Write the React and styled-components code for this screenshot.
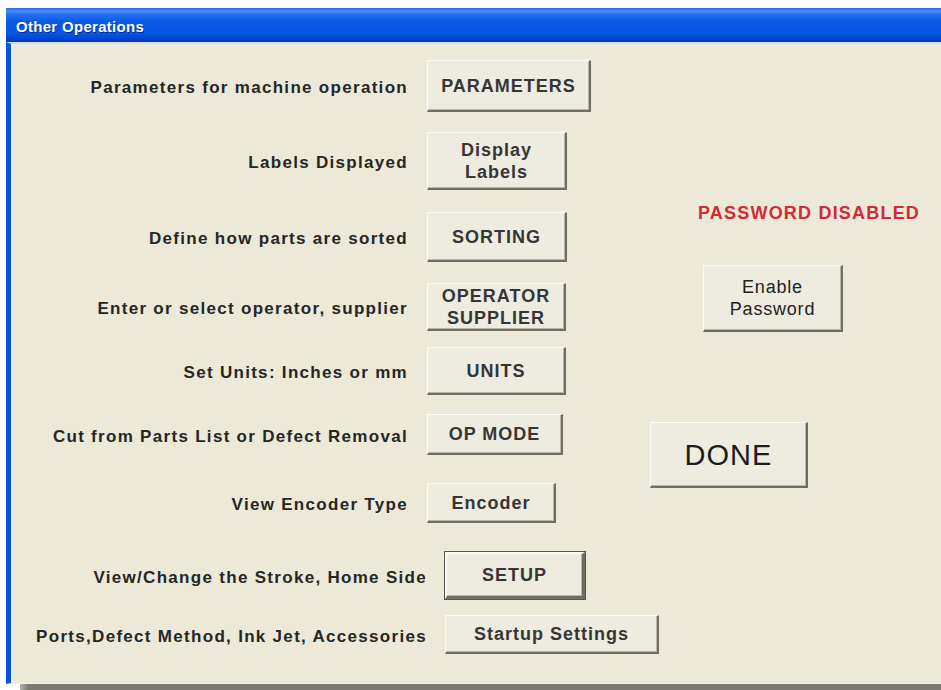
import React from "react";
import styled, { createGlobalStyle, css } from "styled-components";

const GlobalStyle = createGlobalStyle`
  html {
    overflow: hidden;
    background: #ffffff;
  }
  body {
    margin: 0;
    padding: 0;
    background: #ffffff;
    font-family: "Liberation Sans", Arial, sans-serif;
  }
`;

const Desktop = styled.div`
  display: flex;
  flex-direction: column;
  height: 690px;
`;

const Window = styled.div`
  margin: 8px 0 0 6px;
  height: 676px;
  display: flex;
  flex-direction: column;
`;

/* drop shadow under the dialog's lower edge */
const WindowShadow = styled.div`
  height: 6px;
  margin-left: 20px;
  background: linear-gradient(to right, #b4b4ae 0px, #7a7a72 8px, #7a7a72 100%);
`;

const TitleBar = styled.div`
  height: 34px;
  box-sizing: border-box;
  padding: 10px 0 0 10px;
  background: linear-gradient(
    to bottom,
    #2a6ae6 0px,
    #4a92f4 3px,
    #2a74f2 6px,
    #0a5ae8 13px,
    #0656e6 25px,
    #0448d4 30px,
    #0336b4 34px
  );
`;

const Title = styled.span`
  color: #ffffff;
  font-weight: 700;
  font-size: 15px;
  letter-spacing: 0.3px;
  text-shadow: 1px 1px 0 #0b2a8c;
`;

const Client = styled.div`
  flex: 1;
  display: flex;
  background: #ece9d8;
  border-left: 5px solid #0a50e2;
  border-top: 2px solid #cfdcf4;
  border-bottom: 1px solid #f4f2ea;
  box-shadow: inset 2px 0 0 #f3efe6;
`;

const LeftPanel = styled.div`
  width: 629px;
  display: flex;
  flex-direction: column;
`;

const Row = styled.div`
  display: grid;
  grid-template-columns: ${(p) => p.$col}px auto;
  column-gap: ${(p) => p.$spacing}px;
  align-items: center;
  margin-top: ${(p) => p.$gap}px;
`;

const Label = styled.span`
  text-align: right;
  white-space: nowrap;
  color: #262626;
  font-size: 17px;
  font-weight: 700;
  letter-spacing: 1.3px;
  padding-top: 4px;
`;

const Button = styled.button`
  box-sizing: border-box;
  width: ${(p) => p.$w}px;
  height: ${(p) => p.$h}px;
  padding: 0;
  margin: 0;
  display: flex;
  flex-direction: column;
  align-items: center;
  justify-content: center;
  background: #eeebe1;
  color: ${(p) => p.$ink || "#363636"};
  font-family: "Liberation Sans", Arial, sans-serif;
  font-size: ${(p) => p.$size || 18}px;
  font-weight: ${(p) => p.$weight || 700};
  letter-spacing: ${(p) => (p.$ls != null ? p.$ls : 1)}px;
  line-height: 22px;
  border-style: solid;
  border-width: 1px 2px 2px 1px;
  border-color: #fbfaf5 #6f6d64 #6f6d64 #fbfaf5;
  box-shadow: inset -1px -1px 0 #b9b6a8;
  cursor: default;
  ${(p) =>
    p.$default &&
    css`
      outline: 1px solid #55544e;
      outline-offset: 0;
      border-width: 2px 3px 3px 2px;
    `}
`;

const RightPanel = styled.div`
  flex: 1;
  display: flex;
  flex-direction: column;
  align-items: flex-start;
`;

const Slot = styled.div`
  margin-top: ${(p) => p.$gap}px;
  margin-left: ${(p) => p.$indent}px;
`;

const Status = styled.span`
  display: block;
  color: #d42a34;
  font-size: 18px;
  font-weight: 700;
  letter-spacing: 1.2px;
  line-height: 22px;
  white-space: nowrap;
`;

const operations = [
  { label: "Parameters for machine operation", text: ["PARAMETERS"], w: 164, h: 52, gap: 16 },
  { label: "Labels Displayed", text: ["Display", "Labels"], w: 140, h: 58, gap: 20 },
  { label: "Define how parts are sorted", text: ["SORTING"], w: 140, h: 50, gap: 22 },
  { label: "Enter or select operator, supplier", text: ["OPERATOR", "SUPPLIER"], w: 139, h: 48, gap: 21 },
  { label: "Set Units: Inches or mm", text: ["UNITS"], w: 139, h: 48, gap: 16 },
  { label: "Cut from Parts List or Defect Removal", text: ["OP MODE"], w: 136, h: 41, gap: 19 },
  { label: "View Encoder Type", text: ["Encoder"], w: 129, h: 40, gap: 28 },
  { label: "View/Change the Stroke, Home Side", text: ["SETUP"], w: 140, h: 47, gap: 29, col: 416, spacing: 18, isDefault: true },
  { label: "Ports,Defect Method, Ink Jet, Accessories", text: ["Startup Settings"], w: 214, h: 39, gap: 16, col: 416, spacing: 18 },
];

function ButtonText({ lines }) {
  return lines.map((line) => <span key={line}>{line}</span>);
}

export default function App() {
  return (
    <>
      <GlobalStyle />
      <Desktop>
        <Window>
          <TitleBar>
            <Title>Other Operations</Title>
          </TitleBar>
          <Client>
            <LeftPanel>
              {operations.map((op) => (
                <Row
                  key={op.label}
                  $col={op.col || 397}
                  $spacing={op.spacing || 19}
                  $gap={op.gap}
                >
                  <Label>{op.label}</Label>
                  <Button $w={op.w} $h={op.h} $default={op.isDefault}>
                    <ButtonText lines={op.text} />
                  </Button>
                </Row>
              ))}
            </LeftPanel>
            <RightPanel>
              <Slot $gap={158} $indent={58}>
                <Status>PASSWORD DISABLED</Status>
              </Slot>
              <Slot $gap={41} $indent={63}>
                <Button $w={140} $h={67} $weight={400} $size={18} $ls={0.8} $ink="#222222">
                  <ButtonText lines={["Enable", "Password"]} />
                </Button>
              </Slot>
              <Slot $gap={90} $indent={10}>
                <Button $w={158} $h={66} $weight={400} $size={29} $ls={1} $ink="#1c1c1c">
                  <ButtonText lines={["DONE"]} />
                </Button>
              </Slot>
            </RightPanel>
          </Client>
        </Window>
        <WindowShadow />
      </Desktop>
    </>
  );
}
